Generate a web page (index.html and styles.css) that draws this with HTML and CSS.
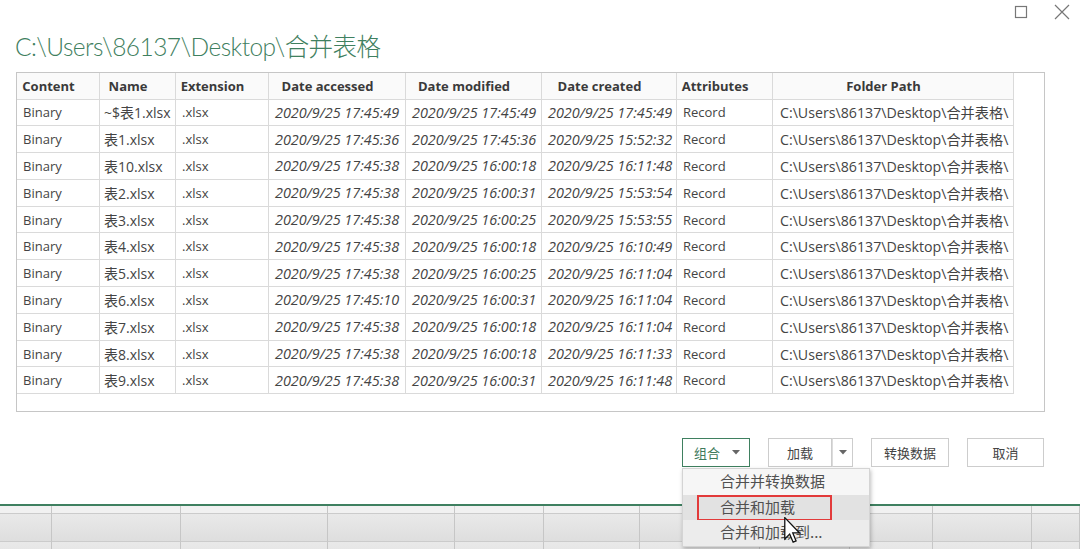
FILE: index.html
```html
<!DOCTYPE html>
<html lang="zh-CN">
<head>
  <meta charset="UTF-8" />
  <title>合并表格</title>
  <link rel="stylesheet" href="styles.css">
</head>
<body>
  <div class="window">
    <div class="win-controls">
      <svg class="win-icon" width="14" height="14" viewBox="0 0 14 14"><rect x="1.5" y="1.5" width="11" height="11" fill="none" stroke="#777" stroke-width="1.2"/></svg>
      <svg class="win-icon" width="16" height="16" viewBox="0 0 16 16"><path d="M1 1 L15 15 M15 1 L1 15" stroke="#777" stroke-width="1.2"/></svg>
    </div>

    <h1 class="title">C:\Users\86137\Desktop\合并表格</h1>

    <div class="grid-frame">
      <table class="files">
        <colgroup>
          <col class="c-content"><col class="c-name"><col class="c-ext"><col class="c-date">
          <col class="c-date2"><col class="c-date3"><col class="c-attr"><col class="c-path">
        </colgroup>
        <thead>
          <tr>
            <th>Content</th><th>Name</th><th>Extension</th><th>Date accessed</th>
            <th>Date modified</th><th>Date created</th><th>Attributes</th><th>Folder Path</th>
          </tr>
        </thead>
        <tbody>
          <tr><td>Binary</td><td class="nm">~$表1.xlsx</td><td>.xlsx</td><td class="dt">2020/9/25 17:45:49</td><td class="dt">2020/9/25 17:45:49</td><td class="dt">2020/9/25 17:45:49</td><td>Record</td><td class="path">C:\Users\86137\Desktop\合并表格\</td></tr>
          <tr><td>Binary</td><td class="nm">表1.xlsx</td><td>.xlsx</td><td class="dt">2020/9/25 17:45:36</td><td class="dt">2020/9/25 17:45:36</td><td class="dt">2020/9/25 15:52:32</td><td>Record</td><td class="path">C:\Users\86137\Desktop\合并表格\</td></tr>
          <tr><td>Binary</td><td class="nm">表10.xlsx</td><td>.xlsx</td><td class="dt">2020/9/25 17:45:38</td><td class="dt">2020/9/25 16:00:18</td><td class="dt">2020/9/25 16:11:48</td><td>Record</td><td class="path">C:\Users\86137\Desktop\合并表格\</td></tr>
          <tr><td>Binary</td><td class="nm">表2.xlsx</td><td>.xlsx</td><td class="dt">2020/9/25 17:45:38</td><td class="dt">2020/9/25 16:00:31</td><td class="dt">2020/9/25 15:53:54</td><td>Record</td><td class="path">C:\Users\86137\Desktop\合并表格\</td></tr>
          <tr><td>Binary</td><td class="nm">表3.xlsx</td><td>.xlsx</td><td class="dt">2020/9/25 17:45:38</td><td class="dt">2020/9/25 16:00:25</td><td class="dt">2020/9/25 15:53:55</td><td>Record</td><td class="path">C:\Users\86137\Desktop\合并表格\</td></tr>
          <tr><td>Binary</td><td class="nm">表4.xlsx</td><td>.xlsx</td><td class="dt">2020/9/25 17:45:38</td><td class="dt">2020/9/25 16:00:18</td><td class="dt">2020/9/25 16:10:49</td><td>Record</td><td class="path">C:\Users\86137\Desktop\合并表格\</td></tr>
          <tr><td>Binary</td><td class="nm">表5.xlsx</td><td>.xlsx</td><td class="dt">2020/9/25 17:45:38</td><td class="dt">2020/9/25 16:00:25</td><td class="dt">2020/9/25 16:11:04</td><td>Record</td><td class="path">C:\Users\86137\Desktop\合并表格\</td></tr>
          <tr><td>Binary</td><td class="nm">表6.xlsx</td><td>.xlsx</td><td class="dt">2020/9/25 17:45:10</td><td class="dt">2020/9/25 16:00:31</td><td class="dt">2020/9/25 16:11:04</td><td>Record</td><td class="path">C:\Users\86137\Desktop\合并表格\</td></tr>
          <tr><td>Binary</td><td class="nm">表7.xlsx</td><td>.xlsx</td><td class="dt">2020/9/25 17:45:38</td><td class="dt">2020/9/25 16:00:18</td><td class="dt">2020/9/25 16:11:04</td><td>Record</td><td class="path">C:\Users\86137\Desktop\合并表格\</td></tr>
          <tr><td>Binary</td><td class="nm">表8.xlsx</td><td>.xlsx</td><td class="dt">2020/9/25 17:45:38</td><td class="dt">2020/9/25 16:00:18</td><td class="dt">2020/9/25 16:11:33</td><td>Record</td><td class="path">C:\Users\86137\Desktop\合并表格\</td></tr>
          <tr><td>Binary</td><td class="nm">表9.xlsx</td><td>.xlsx</td><td class="dt">2020/9/25 17:45:38</td><td class="dt">2020/9/25 16:00:31</td><td class="dt">2020/9/25 16:11:48</td><td>Record</td><td class="path">C:\Users\86137\Desktop\合并表格\</td></tr>
        </tbody>
      </table>
    </div>

    <div class="actions">
      <div class="combine-wrap">
        <button class="btn btn-combine">组合<svg class="caret" width="8" height="5" viewBox="0 0 8 5"><path d="M0 0 H8 L4 4.5 Z" fill="#666"/></svg></button>
        <div class="menu">
          <div class="menu-item">合并并转换数据</div>
          <div class="menu-item active">合并和加载<span class="mark"></span></div>
          <div class="menu-item soft">合并和加载到...</div>
          <svg class="cursor" width="17" height="27" viewBox="0 0 13 21"><path d="M0.5 0.5 L0.5 17 L4.3 13.3 L7 19.6 L9.3 18.6 L6.7 12.4 L12 12.4 Z" fill="#fff" stroke="#111" stroke-width="1"/></svg>
        </div>
      </div>
      <div class="split">
        <button class="btn split-main">加载</button>
        <button class="btn split-arrow"><svg width="8" height="5" viewBox="0 0 8 5"><path d="M0 0 H8 L4 4.5 Z" fill="#666"/></svg></button>
      </div>
      <button class="btn btn-transform">转换数据</button>
      <button class="btn btn-cancel">取消</button>
    </div>
  </div>

  <div class="sheet">
    <div></div><div></div><div></div><div></div><div></div><div></div><div></div><div></div><div></div><div></div><div></div>
    <div></div><div></div><div></div><div></div><div></div><div></div><div></div><div></div><div></div><div></div><div></div>
    <div></div><div></div><div></div><div></div><div></div><div></div><div></div><div></div><div></div><div></div><div></div>
  </div>
</body>
</html>
```

FILE: styles.css
```css
* { box-sizing: border-box; }
html, body {
  margin: 0;
  padding: 0;
  background: #fff;
  font-family: "Open Sans", "Noto Sans CJK SC", sans-serif;
  color: #444;
  overflow: hidden;
}
body {
  height: 549px;
  display: flex;
  flex-direction: column;
}
.window {
  display: flex;
  flex-direction: column;
}
.win-controls {
  height: 25px;
  display: flex;
  justify-content: flex-end;
  align-items: center;
  gap: 26px;
  padding: 0 10px 1px 0;
}
.win-icon { display: block; }
.title {
  margin: 2px 0 0 15px;
  height: 45px;
  line-height: 40px;
  font-family: Lato, "Noto Sans CJK SC", sans-serif;
  font-weight: 300;
  font-size: 24.5px;
  letter-spacing: -0.55px;
  color: #3f8060;
}
.grid-frame {
  margin-left: 16px;
  width: 1029px;
  height: 340px;
  border: 1px solid #c6c6c6;
  background: #fff;
}
.files {
  border-collapse: separate;
  border-spacing: 0;
  table-layout: fixed;
  width: 997px;
  font-size: 13px;
}
.c-content { width: 83px; }
.c-name { width: 76px; }
.c-ext { width: 93px; }
.c-date { width: 137px; }
.c-date2 { width: 136px; }
.c-date3 { width: 135px; }
.c-attr { width: 96px; }
.c-path { width: 241px; }
.files th, .files td {
  border-right: 1px solid #dadada;
  border-bottom: 1px solid #dadada;
  white-space: nowrap;
  overflow: hidden;
  font-family: "Open Sans", "Noto Sans CJK SC", sans-serif;
}
.files thead tr { height: 26.5px; }
.files th {
  background: #fafafa;
  font-weight: bold;
  color: #3a3a3a;
  text-align: center;
  padding: 0 19px 0 0;
}
.files tbody tr { height: 26.8px; }
.files td {
  padding: 0 6px;
  color: #444;
}
.files td.nm {
  font-size: 14px;
  padding-left: 4px;
}
.files td.dt {
  font-style: italic;
  font-size: 14.4px;
}
.files td.path {
  font-size: 14.2px;
  padding-left: 7px;
}
.actions {
  margin: 26px 36px 0 0;
  display: flex;
  justify-content: flex-end;
  gap: 18px;
}
.btn {
  height: 29px;
  background: #fff;
  border: 1px solid #cdcdcd;
  font-family: "Noto Sans CJK SC", sans-serif;
  font-size: 13px;
  color: #444;
  padding: 0;
  cursor: pointer;
}
.combine-wrap {
  position: relative;
  margin-right: 0;
}
.btn-combine {
  width: 68px;
  border-color: #3f8060;
  display: flex;
  align-items: center;
  justify-content: center;
  gap: 12px;
  padding-left: 2px;
  color: #3f7a5c;
}
.caret { display: block; }
.split { display: flex; }
.split-main { width: 64px; }
.split-arrow {
  width: 21px;
  border-left: 1px solid #dcdcdc;
  display: flex;
  align-items: center;
  justify-content: center;
}
.btn-transform { width: 78px; }
.btn-cancel { width: 77px; }
.menu {
  position: absolute;
  top: 30px;
  left: 0;
  width: 188px;
  background: #f6f6f6;
  border: 1px solid #d4d4d4;
  box-shadow: 1px 2px 4px rgba(0, 0, 0, 0.25);
  z-index: 10;
}
.menu-item {
  position: relative;
  height: 25.5px;
  line-height: 23px;
  padding-left: 37px;
  font-family: "Noto Sans CJK SC", sans-serif;
  font-size: 15px;
  color: #505050;
  white-space: nowrap;
}
.menu-item.active { background: #e2e2e2; }
.menu-item.soft { background: #ececec; }
.mark {
  position: absolute;
  left: 14px;
  top: 0;
  width: 135px;
  height: 26px;
  border: 2px solid #e23a3a;
}
.cursor {
  position: absolute;
  left: 101px;
  top: 48px;
}
.sheet {
  margin-top: 37px;
  flex: 1;
  border-top: 2px solid #3f8060;
  display: grid;
  grid-template-columns: 52px 129px 147px 127px 89px 96px 120px 90px 83px 99px 1fr;
  grid-template-rows: 8px 28px 28px;
  background: #e4e4e4;
}
.sheet div {
  border-right: 1px solid #c6c6c6;
  border-bottom: 1px solid #cbcbcb;
}
.sheet div:nth-child(-n+11) { background: #f1f1f1; }
.sheet div:nth-child(n+12) {
  background: linear-gradient(#e9e9e9, #dedede);
}
```
